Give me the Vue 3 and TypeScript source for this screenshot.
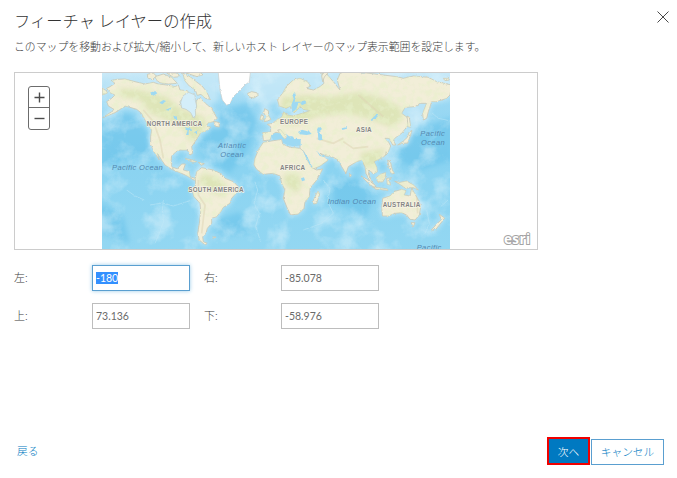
<script setup lang="ts">
import { onMounted, ref } from 'vue'

interface Field {
  id: string
  label: string
  value: string
}

interface MapLabel {
  text: string
  x: number
  y: number
  width: number
  kind: 'land' | 'sea'
}

const fields = ref<Field[]>([
  { id: 'left', label: '左:', value: '-180' },
  { id: 'right', label: '右:', value: '-85.078' },
  { id: 'top', label: '上:', value: '73.136' },
  { id: 'bottom', label: '下:', value: '-58.976' },
])

const labels: MapLabel[] = [
  { text: 'NORTH AMERICA', x: 140, y: 167, width: 166, kind: 'land' },
  { text: 'SOUTH AMERICA', x: 265, y: 366, width: 166, kind: 'land' },
  { text: 'EUROPE', x: 540, y: 162, width: 84, kind: 'land' },
  { text: 'AFRICA', x: 540, y: 301, width: 75, kind: 'land' },
  { text: 'ASIA', x: 768, y: 187, width: 47, kind: 'land' },
  { text: 'AUSTRALIA', x: 848, y: 411, width: 113, kind: 'land' },
  { text: 'Pacific Ocean', x: 36, y: 301, width: 152, kind: 'sea' },
  { text: 'Atlantic', x: 354, y: 234, width: 84, kind: 'sea' },
  { text: 'Ocean', x: 361, y: 262, width: 70, kind: 'sea' },
  { text: 'Pacific', x: 961, y: 198, width: 73, kind: 'sea' },
  { text: 'Ocean', x: 963, y: 225, width: 71, kind: 'sea' },
  { text: 'Indian Ocean', x: 683, y: 402, width: 145, kind: 'sea' },
  { text: 'Pacific', x: 950, y: 540, width: 74, kind: 'sea' },
]

const land: string[] = [
  // North and Central America
  'M30 50L45 40L35 32L50 28L75 27L105 35L135 42L160 37L175 42L200 45L225 50L235 45L240 60L262 62L268 72L250 82L240 95L245 112L262 118L275 128L278 142L285 140L284 122L290 110L288 92L300 85L312 95L322 105L335 115L345 135L352 145L340 155L325 158L318 168L332 172L320 182L302 188L292 205L285 215L275 230L278 250L270 255L262 240L240 240L228 245L215 258L213 275L217 292L232 296L245 282L256 282L250 300L268 305L270 320L285 325L300 320L290 330L281 330L262 318L240 308L215 298L195 285L185 270L172 250L178 270L165 250L152 225L152 200L155 180L145 165L135 150L125 130L110 118L90 112L75 108L65 115L45 128L20 138L8 143L35 125L42 118L25 108L20 95L35 85L45 75L30 68L20 55Z',
  // South America
  'M290 305L305 293L325 297L340 300L365 312L375 325L400 335L415 350L412 365L395 385L390 400L370 412L362 425L350 440L335 445L335 460L322 475L318 490L308 500L310 515L322 520L315 525L298 510L293 490L298 460L302 425L300 400L282 380L277 362L287 345L286 325Z',
  // Eurasia
  'M490 212L488 188L512 186L512 170L502 163L520 160L532 148L545 142L552 125L560 135L580 138L600 132L632 122L610 118L600 108L592 120L582 128L572 108L558 115L538 108L532 88L548 70L560 48L580 30L600 25L622 35L632 48L618 55L640 60L660 50L672 40L665 10L680 12L700 35L720 60L712 30L720 10L735 5L800 9L850 15L890 20L910 25L940 18L985 22L1010 35L1055 45L1050 75L1040 85L1010 95L995 95L985 125L980 145L970 150L968 130L980 100L960 100L945 110L915 112L905 130L925 145L925 165L905 190L890 200L880 210L887 225L878 225L868 205L855 205L865 215L872 228L865 245L850 262L835 268L822 275L830 292L832 305L820 312L808 300L805 312L820 342L808 330L798 310L795 290L785 270L770 275L745 290L738 310L725 290L715 270L700 262L680 258L660 250L675 262L685 270L660 288L632 300L625 280L605 250L600 238L600 225L580 225L560 222L550 205L530 185L515 195L510 210Z',
  // Africa
  'M490 217L520 212L545 208L548 222L570 232L600 235L612 245L622 270L635 293L650 300L668 297L650 330L630 355L628 380L615 395L612 415L595 432L572 435L562 415L550 385L555 360L545 340L540 318L520 310L490 313L470 298L462 285L465 265L475 240Z',
  // Australia and Tasmania
  'M848 385L870 378L882 365L905 358L918 362L912 375L930 378L935 355L945 372L958 395L962 410L958 435L945 450L930 448L920 435L905 428L885 430L865 438L848 438L845 415Z',
  'M933 458L945 458L940 470Z',
  // New Zealand
  'M1018 433L1034 444L1026 455L1005 481L994 480L1010 462L1024 449Z',
  // Madagascar
  'M654 364L659 372L650 400L641 402L641 387Z',
  // Indonesia, Borneo, New Guinea
  'M783 318L800 327L825 345L828 354L812 346Z',
  'M822 351L862 357L864 361L825 357Z',
  'M828 324L842 312L857 308L855 325L848 336L833 335Z',
  'M860 325L875 323L866 330L872 345L862 343Z',
  'M884 334L900 337L920 333L942 346L955 360L940 353L915 354L903 345Z',
  // Philippines and Taiwan
  'M863 270L872 278L877 300L883 310L874 312L867 292Z',
  'M858 245L862 250L857 256Z',
  // Japan and Sakhalin
  'M928 185L936 182L930 200L923 219L908 220L893 225L910 213L922 202Z',
  'M921 138L928 142L932 172L924 170Z',
  // British Isles and Iceland
  'M494 116L505 122L506 138L513 148L502 153L492 154L498 140L491 128Z',
  'M484 134L491 138L489 150L480 149Z',
  'M443 70L455 65L470 68L475 76L462 84L447 81Z',
  // Italy
  'M533 180L542 179L559 201L558 207L548 202Z',
  // Canadian Arctic
  'M165 20L190 12L215 22L232 40L205 42L180 38L170 31Z',
  'M200 9L232 9L240 20L220 22Z',
  'M248 9L270 20L286 33L306 48L320 65L330 88L316 85L303 73L292 76L286 60L268 48L255 33Z',
  'M142 13L160 9L169 18L157 29L144 24Z',
  'M258 9L292 5L309 14L291 20Z',
  // Newfoundland
  'M341 153L357 158L358 171L346 169Z',
  // Cuba and Hispaniola
  'M256 266L275 269L291 276L276 276Z',
  'M295 277L313 281L304 286Z',
  // Falklands and Sri Lanka
  'M337 501L346 501L342 505Z',
  'M749 309L754 316L750 321Z',
  // Arctic islands
  'M668 35L665 18L675 -2L686 6L673 21Z',
  'M1030 25L1045 25L1048 30L1035 32Z',
  'M7 55L19 62L22 69L7 75Z',
]

const inlandWater: string[] = [
  'M150 68L165 62L172 70L160 77Z',
  'M178 98L190 90L198 93L187 103Z',
  'M196 120L215 112L209 122Z',
  'M220 137L230 139L232 149L223 146Z',
  'M254 172L270 175L279 182L266 182L266 195L258 195L263 182Z',
  'M281 187L295 181L290 190Z',
  // Black Sea and Caspian
  'M594 186L606 179L616 182L625 181L635 192L620 195L600 193Z',
  'M651 176L661 171L666 177L659 184L665 195L668 212L655 210L654 194Z',
  // Baltic Sea
  'M574 105L581 86L577 74L585 66L588 80L584 95L608 95L595 100L589 116L577 128Z',
  // Mediterranean
  'M513 197L524 190L541 190L550 204L556 208L562 198L557 190L567 199L577 199L584 206L602 208L602 226L582 229L565 226L549 218L546 207L520 210Z',
  // Red Sea and Persian Gulf
  'M607 239L617 260L634 292L637 291L622 260Z',
  'M650 242L664 257L674 254L671 261L659 257Z',
  // Lake Baikal, Lake Balkhash, Lake Victoria
  'M812 150L823 139L833 130L835 137L824 148L815 153Z',
  'M725 175L740 171L741 176L727 180Z',
  'M603 325L612 322L615 331L606 334Z',
  'M601 99L613 91L619 100L606 106Z',
]

const form = ref<HTMLFormElement | null>(null)

onMounted(() => {
  const input = form.value?.querySelector<HTMLInputElement>('input')
  input?.focus()
  input?.select()
})
</script>

<template>
  <main class="dialog">
    <header class="head">
      <h1>フィーチャ レイヤーの作成</h1>
      <button class="close" type="button">
        <svg width="12" height="12" viewBox="0 0 12 12"><path d="M.5 .5L11.5 11.5M11.5 .5L.5 11.5" /></svg>
      </button>
    </header>
    <p class="lead">このマップを移動および拡大/縮小して、新しいホスト レイヤーのマップ表示範囲を設定します。</p>

    <section class="map">
      <svg class="world" width="348" height="177" viewBox="6 9 1044 531">
        <defs>
          <linearGradient id="sea" x1="0" y1="0" x2="0" y2="1">
            <stop offset="0" stop-color="#c9e9f8" />
            <stop offset=".18" stop-color="#9ad8f3" />
            <stop offset=".5" stop-color="#8ad3f1" />
            <stop offset="1" stop-color="#93d7f2" />
          </linearGradient>
          <filter id="soft" x="-30%" y="-30%" width="160%" height="160%"><feGaussianBlur stdDeviation="8" /></filter>
          <filter id="coast" x="-5%" y="-5%" width="110%" height="110%">
            <feTurbulence type="fractalNoise" baseFrequency=".12" numOctaves="3" seed="4" result="n" />
            <feDisplacementMap in="SourceGraphic" in2="n" scale="7" xChannelSelector="R" yChannelSelector="G" />
          </filter>
          <filter id="reef" x="0" y="0" width="100%" height="100%">
            <feTurbulence type="fractalNoise" baseFrequency=".014" numOctaves="5" seed="9" />
            <feColorMatrix values="0 0 0 0 .78  0 0 0 0 .92  0 0 0 0 .98  0 3 0 0 -1.4" />
          </filter>
          <filter id="relief" x="0" y="0" width="100%" height="100%">
            <feTurbulence type="fractalNoise" baseFrequency=".05" numOctaves="5" seed="2" />
            <feColorMatrix values="0 0 0 0 .80  0 0 0 0 .87  0 0 0 0 .60  0 4 0 0 -1.75" />
          </filter>
          <clipPath id="landClip"><path v-for="(d, i) in land" :key="i" :d="d" /></clipPath>
        </defs>
        <rect x="6" y="9" width="1044" height="531" fill="url(#sea)" />
        <g class="deep" filter="url(#soft)">
          <path d="M0 140L90 130L145 190L165 270L100 262L0 300Z" />
          <path d="M365 120L440 100L470 150L450 230L390 310L320 270L300 220Z" />
          <path d="M895 225L960 175L1060 140L1060 270L960 300L900 275Z" />
          <path d="M0 400L70 440L90 520L0 490Z" />
          <path d="M345 450L420 425L450 490L350 500Z" />
          <path d="M700 340L760 320L820 380L800 440L700 400Z" />
        </g>
        <g class="shelf" filter="url(#soft)">
          <path v-for="(d, i) in land" :key="i" :d="d" />
          <path d="M230 5L350 5L350 90L280 130L240 100Z" />
          <path d="M450 5L720 5L700 50L560 60L490 120Z" />
          <path d="M910 105L980 100L970 150L920 180Z" />
        </g>
        <rect x="6" y="9" width="1044" height="531" filter="url(#reef)" opacity=".45" />
        <g class="ridge" filter="url(#coast)">
          <path d="M190 390L187 420L191 455L178 490L165 520M150 405L187 399L220 408L270 392" />
          <path d="M465 335L473 360L462 400L478 430L467 470L482 515" />
          <path d="M670 330L690 355L683 395L700 430L665 460L610 480" />
          <path d="M80 360L105 378L133 390" />
          <path d="M980 420L988 460L975 490M1022 410L1044 390" />
          <path d="M997 130L1015 145L1048 152" />
        </g>
        <g filter="url(#coast)">
          <path v-for="(d, i) in land" :key="i" class="land" :d="d" />
        </g>
        <g clip-path="url(#landClip)">
          <g class="green" filter="url(#soft)">
            <path d="M60 55L120 60L200 80L240 115L310 140L320 165L300 200L270 215L250 175L200 150L150 130L120 90L60 80Z" />
            <path d="M545 80L620 75L690 80L780 65L850 85L900 110L910 150L870 170L800 145L740 130L650 140L590 165L540 160Z" />
            <path d="M310 310L350 320L385 355L370 380L320 360L295 330Z" />
            <path d="M550 315L595 310L605 345L590 370L555 345Z" />
            <path d="M780 250L855 235L830 295L790 290Z" />
            <path d="M825 315L855 310L850 335ZM890 338L950 355L905 350Z" />
          </g>
          <rect x="6" y="20" width="1044" height="420" filter="url(#relief)" opacity=".55" />
          <path class="mountain" d="M130 120L160 155L180 210L190 265M295 330L295 375L315 405L305 490M730 215L760 235L805 230M650 205L700 220L730 205M775 75L850 140M950 375L953 430" />
        </g>
        <path class="ice" d="M354 0L360 60L367 90L380 106L392 98L400 80L420 60L435 45L448 35L452 0Z" filter="url(#coast)" />
        <path class="bay" d="M249 77L266 67L285 75L286 91L290 108L286 121L287 137L280 143L272 128L258 118L245 114L242 97Z" filter="url(#coast)" />
        <g filter="url(#coast)">
          <path v-for="(d, i) in inlandWater" :key="i" class="lake" :d="d" />
        </g>
        <text
          v-for="(l, i) in labels"
          :key="i"
          :class="l.kind"
          :x="l.x"
          :y="l.y"
          :textLength="l.width"
        >{{ l.text }}</text>
      </svg>
      <div class="zoom">
        <button type="button"><svg width="11" height="11" viewBox="0 0 11 11"><path d="M5.5 .5V10.5M.5 5.5H10.5" /></svg></button>
        <button type="button"><svg width="11" height="11" viewBox="0 0 11 11"><path d="M.5 5.5H10.5" /></svg></button>
      </div>
      <svg class="esri" width="36" height="26" viewBox="0 0 36 26"><text x="3" y="18" textLength="26">esri</text></svg>
    </section>

    <form ref="form" class="extent">
      <template v-for="f in fields" :key="f.id">
        <label :for="f.id">{{ f.label }}</label>
        <input :id="f.id" v-model="f.value" type="text" autocomplete="off" />
      </template>
    </form>

    <footer class="foot">
      <a class="back">戻る</a>
      <button class="next" type="button">次へ</button>
      <button class="cancel" type="button">キャンセル</button>
    </footer>
  </main>
</template>

<style>
body {
  background: #fff;
}
</style>

<style scoped>
.dialog {
  box-sizing: border-box;
  display: flex;
  flex-direction: column;
  width: 677px;
  height: 478px;
  padding: 8px 13px 13px 14px;
  overflow: hidden;
  color: #3c3c3c;
  font-family: Lato, "Noto Sans CJK JP", sans-serif;
  font-weight: 300;
}
button {
  box-sizing: border-box;
  padding: 0;
  border: 0;
  font: inherit;
}
.head {
  display: flex;
  justify-content: space-between;
  height: 26px;
}
h1 {
  margin: 0;
  color: #333;
  font-family: "Noto Sans CJK JP", sans-serif;
  font-size: 16.3px;
  font-weight: 300;
  line-height: 24px;
}
.close {
  width: 12px;
  height: 12px;
  margin: 3px -5px 0 0;
  background: none;
}
.close svg {
  display: block;
  overflow: visible;
  fill: none;
  stroke: #484848;
}
.lead {
  height: 20px;
  margin: 2px 0 16px;
  font-family: "Noto Sans CJK JP", sans-serif;
  font-size: 10.86px;
  line-height: 20px;
  white-space: nowrap;
}
.map {
  position: relative;
  box-sizing: border-box;
  flex: none;
  width: 524px;
  height: 178px;
  padding-left: 87px;
  border: 1px solid #ccc;
  overflow: hidden;
}
.world {
  display: block;
}
.deep {
  fill: #69c3ea;
  opacity: .6;
}
.shelf {
  fill: #c4e8f8;
  stroke: #c4e8f8;
  stroke-width: 8px;
  opacity: .8;
}
.ridge {
  fill: none;
  stroke: #c2e8f7;
  stroke-width: 3px;
  opacity: .5;
}
.land {
  fill: #f2eed8;
  stroke: #c8c9b8;
  stroke-width: 2.5px;
}
.green {
  fill: #d6e2ac;
  opacity: .7;
}
.mountain {
  fill: none;
  stroke: #ddd3b4;
  stroke-width: 5px;
  opacity: .5;
}
.ice {
  fill: #fff;
  stroke: #c8cdca;
  stroke-width: 2px;
}
.bay {
  fill: #d4eef9;
  stroke: #c5ccc2;
  stroke-width: 2px;
}
.lake {
  fill: #9dd9f3;
}
.land,
.lake {
  stroke-linejoin: round;
}
text.land {
  fill: #858585;
  stroke: #f7f4e6;
  stroke-width: 4px;
  paint-order: stroke;
  font: 700 19px "Liberation Sans", sans-serif;
}
.sea {
  fill: #5488b0;
  font: italic 400 22.5px "Liberation Sans", sans-serif;
}
.zoom {
  position: absolute;
  top: 13px;
  left: 13px;
  box-sizing: border-box;
  width: 22px;
  height: 44px;
  border: 1px solid #6c6c6c;
  border-radius: 3px;
  background: #fff;
}
.zoom button {
  display: flex;
  align-items: center;
  justify-content: center;
  width: 20px;
  height: 20px;
  background: none;
}
.zoom button + button {
  height: 21px;
  border-top: 1px solid #6c6c6c;
}
.zoom path {
  fill: none;
  stroke: #4c4c4c;
  stroke-width: 1.4px;
}
.esri {
  position: absolute;
  right: 0;
  bottom: -3px;
}
.esri text {
  fill: #fff;
  stroke: #a4a4a4;
  stroke-width: 2px;
  paint-order: stroke;
  font: 700 13.5px "Open Sans", sans-serif;
}
.extent {
  display: grid;
  grid-template-columns: 78px 98px 91px 98px;
  grid-template-rows: 26px 26px;
  row-gap: 12px;
  margin-top: 15px;
}
.extent label {
  font-size: 11px;
  line-height: 25px;
}
.extent label:nth-of-type(even) {
  padding-left: 14px;
}
.extent input {
  box-sizing: border-box;
  width: 98px;
  height: 26px;
  padding: 0 3px 1px;
  border: 1px solid #bdbdbd;
  outline: 0;
  color: #6a6a6a;
  background: #fff;
  font: 400 10.5px Lato, sans-serif;
}
.extent input:focus {
  border-color: #5a9fd0;
  box-shadow: 0 0 4px #9acbe8;
}
.extent input::selection {
  color: #fff;
  background: #3390ff;
}
.foot {
  display: flex;
  align-items: flex-end;
  height: 28px;
  margin-top: auto;
  font-size: 10.7px;
}
.back {
  margin: 0 auto 0 3px;
  color: #0079c1;
  line-height: 29px;
}
.next {
  width: 43px;
  height: 28px;
  margin-right: 1px;
  border: 2px solid #f00000;
  color: #fff;
  background: #0079c1;
}
.cancel {
  width: 73px;
  height: 26px;
  padding-bottom: 2px;
  border: 1px solid #5a9fd0;
  color: #0079c1;
  background: #fff;
}
</style>
